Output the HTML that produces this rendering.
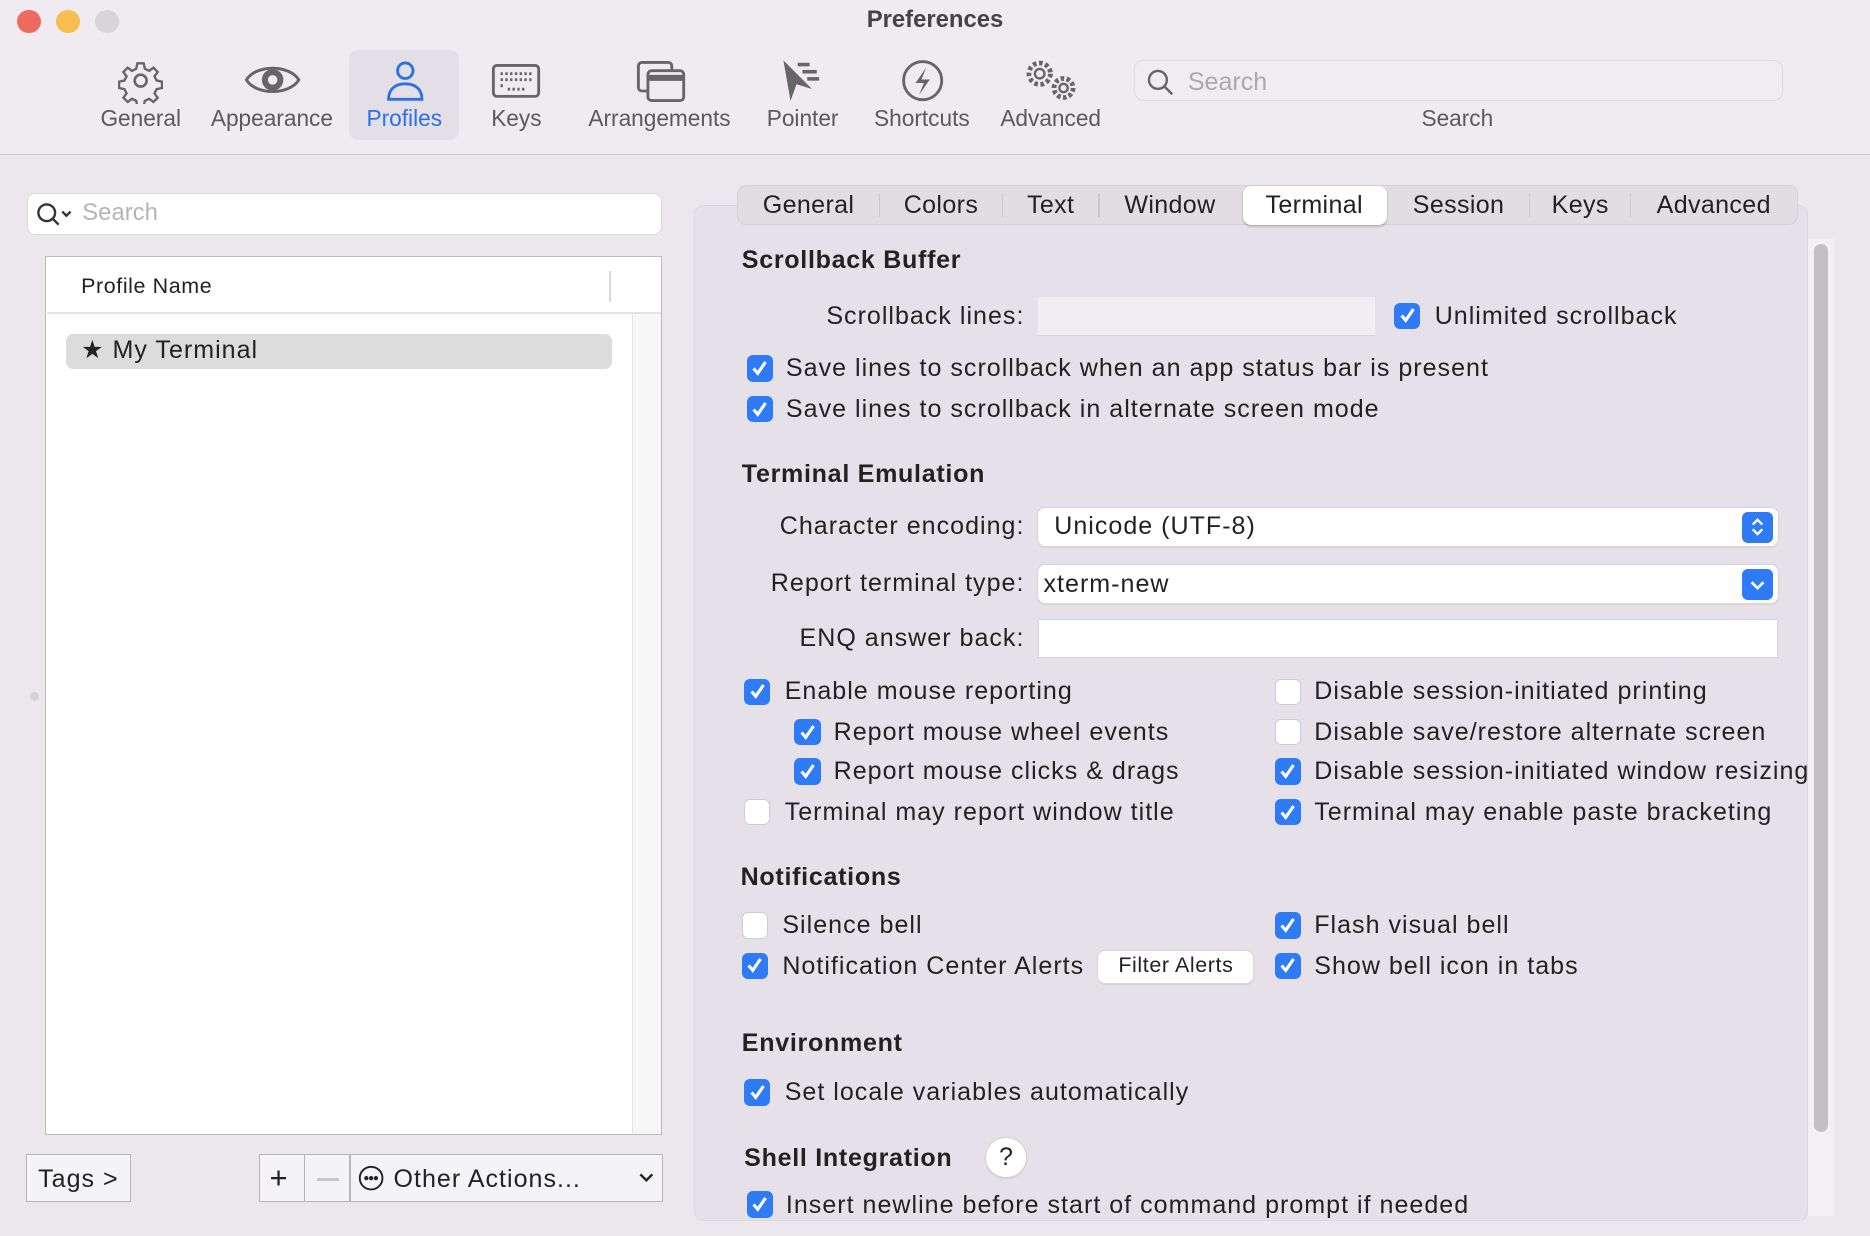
<!DOCTYPE html>
<html><head><meta charset="utf-8"><style>
*{margin:0;padding:0;box-sizing:border-box}
html,body{width:1870px;height:1236px;overflow:hidden;background:#efebf0}
#w{zoom:1.19260;width:1568px;height:1036px;position:relative;font-family:"Liberation Sans",sans-serif;color:#222;background:#efebf0}
.a{position:absolute;white-space:nowrap}
.t{font-size:21px;line-height:24px;letter-spacing:0.85px}
.h{font-size:21px;font-weight:bold;line-height:24px;letter-spacing:0.6px}
.cb{position:absolute;width:22px;height:22px;border-radius:5px;background:#2f7bf6}
.cb svg{position:absolute;left:3px;top:3px}
.cb.off{background:#fff;border:1px solid #cfcbd2}
.lbl{font-size:19px;color:#5a5a5e;line-height:22px;text-align:center;width:140px}
.ic{position:absolute}
.tab{position:absolute;top:160px;font-size:21px;line-height:24px;transform:translateX(-50%);letter-spacing:0.3px}
.sep{position:absolute;top:162px;width:1px;height:20px;background:#cdc8cf}
</style></head><body><div id="w">
<div class="a" style="left:14px;top:8px;width:20px;height:20px;border-radius:50%;background:#ec6a5e"></div>
<div class="a" style="left:47px;top:8px;width:20px;height:20px;border-radius:50%;background:#f4bf4f"></div>
<div class="a" style="left:80px;top:8px;width:20px;height:20px;border-radius:50%;background:#d7d4da"></div>
<div class="a" style="left:0;width:1568px;top:5px;text-align:center;font-size:20px;font-weight:bold;color:#444;line-height:24px">Preferences</div>
<div class="a" style="left:293px;top:42px;width:92px;height:75px;border-radius:8px;background:#e3dfe6"></div>
<svg class="ic" style="left:99px;top:49px" width="38" height="38" viewBox="0 0 38 38" fill="none" stroke="#666" stroke-width="2.2"><path d="M16 3h6l1 5 4 2 4-3 4 4-3 4 2 4 5 1v6l-5 1-2 4 3 4-4 4-4-3-4 2-1 5h-6l-1-5-4-2-4 3-4-4 3-4-2-4-5-1v-6l5-1 2-4-3-4 4-4 4 3 4-2z" transform="scale(.9) translate(2 2)"/><circle cx="19" cy="19" r="5"/></svg>
<svg class="ic" style="left:205px;top:52px" width="48" height="30" viewBox="0 0 48 30" fill="none" stroke="#666" stroke-width="2.5"><path d="M2 15C10 2 38 2 46 15C38 28 10 28 2 15Z"/><circle cx="24" cy="15" r="9" fill="#666" stroke="none"/><circle cx="24" cy="15" r="4" fill="#efebf0" stroke="none"/></svg>
<svg class="ic" style="left:323px;top:50px" width="34" height="36" viewBox="0 0 34 36" fill="none" stroke="#2f6fe6" stroke-width="2.4"><circle cx="17" cy="9" r="6.5"/><path d="M3 33C3 24 9 20 17 20C25 20 31 24 31 33Z"/></svg>
<svg class="ic" style="left:412px;top:53px" width="42" height="30" viewBox="0 0 42 30" fill="none" stroke="#666" stroke-width="2.4"><rect x="2" y="2" width="38" height="26" rx="3"/><path d="M8 9h26M8 14h26M8 19h3M14 22h14" stroke-dasharray="2 2"/></svg>
<svg class="ic" style="left:533px;top:50px" width="42" height="36" viewBox="0 0 42 36" fill="none" stroke="#666" stroke-width="2.4"><rect x="2" y="2" width="28" height="24" rx="3"/><rect x="10" y="9" width="30" height="25" rx="3" fill="#efebf0"/><path d="M10 15h30" stroke-width="5"/></svg>
<svg class="ic" style="left:655px;top:49px" width="36" height="40" viewBox="0 0 36 40" fill="#666"><path d="M2 2L8 36L13 22L26 26Z"/><rect x="14" y="4" width="10" height="3"/><rect x="18" y="10" width="12" height="3"/><rect x="22" y="16" width="10" height="3"/></svg>
<svg class="ic" style="left:755px;top:49px" width="38" height="38" viewBox="0 0 38 38" fill="none" stroke="#666" stroke-width="2.4"><circle cx="19" cy="19" r="16"/><path d="M22 8L13 21h7l-4 10 9-13h-7z" fill="#666" stroke="none"/></svg>
<svg class="ic" style="left:858px;top:48px" width="48" height="40" viewBox="0 0 48 40" fill="none" stroke="#666" stroke-width="2"><circle cx="14" cy="14" r="9" stroke-dasharray="3 2.2" stroke-width="4"/><circle cx="14" cy="14" r="4"/><circle cx="34" cy="26" r="8" stroke-dasharray="3 2" stroke-width="4"/><circle cx="34" cy="26" r="3.5"/></svg>
<div class="a lbl" style="left:48px;top:88px">General</div>
<div class="a lbl" style="left:158px;top:88px">Appearance</div>
<div class="a lbl" style="left:269px;top:88px;color:#2f6fe6">Profiles</div>
<div class="a lbl" style="left:363px;top:88px">Keys</div>
<div class="a lbl" style="left:483px;top:88px">Arrangements</div>
<div class="a lbl" style="left:603px;top:88px">Pointer</div>
<div class="a lbl" style="left:703px;top:88px">Shortcuts</div>
<div class="a lbl" style="left:811px;top:88px">Advanced</div>
<div class="a" style="left:951px;top:50px;width:544px;height:35px;border-radius:8px;background:#f0ecf1;border:1px solid #dedae0"></div>
<svg class="ic" style="left:961px;top:57px" width="24" height="24" viewBox="0 0 24 24" fill="none" stroke="#666" stroke-width="2"><circle cx="10" cy="10" r="7.5"/><path d="M15.5 15.5L22 22"/></svg>
<div class="a" style="left:996px;top:57px;font-size:21px;color:#aaa;line-height:24px">Search</div>
<div class="a lbl" style="left:1152px;top:88px">Search</div>
<div class="a" style="left:0;top:129px;width:1568px;height:1px;background:#cbc7cd"></div>
<div class="a" style="left:0;top:130px;width:1568px;height:906px;background:#ebe7ed"></div>
<div class="a" style="left:23px;top:162px;width:532px;height:35px;border-radius:7px;background:#fff;border:1px solid #dcd8de"></div>
<svg class="ic" style="left:30px;top:169px" width="32" height="22" viewBox="0 0 32 22" fill="none" stroke="#333" stroke-width="2"><circle cx="9" cy="9" r="7"/><path d="M14 14l5 5M22 8l3.5 3.5L29 8"/></svg>
<div class="a" style="left:69px;top:167px;font-size:20px;color:#b5b5b5;line-height:24px">Search</div>
<div class="a" style="left:38px;top:215px;width:517px;height:737px;background:#fff;border:1px solid #bdbabe"></div>
<div class="a" style="left:530px;top:263px;width:24px;height:688px;background:#f7f7f7;border-left:1px solid #e6e6e6"></div>
<div class="a" style="left:39px;top:262px;width:515px;height:1px;background:#e3e3e3"></div>
<div class="a" style="left:511px;top:227px;width:1px;height:26px;background:#d8d8d8"></div>
<div class="a" style="left:68px;top:229px;font-size:18px;line-height:22px;letter-spacing:0.5px">Profile Name</div>
<div class="a" style="left:55px;top:280px;width:458px;height:29px;border-radius:6px;background:#dcdcdc"></div>
<div class="a t" style="left:68px;top:282px">★ My Terminal</div>
<div class="a" style="left:25px;top:580px;width:8px;height:8px;border-radius:50%;background:#d5d2d7"></div>
<div class="a" style="left:22px;top:968px;width:88px;height:40px;background:#f4f3f5;border:1px solid #b8b5ba"></div>
<div class="a t" style="left:32px;top:977px">Tags &gt;</div>
<div class="a" style="left:217px;top:968px;width:339px;height:40px;background:#f4f3f5;border:1px solid #b8b5ba"></div>
<div class="a" style="left:255px;top:968px;width:1px;height:40px;background:#b8b5ba"></div>
<div class="a" style="left:293px;top:968px;width:1px;height:40px;background:#b8b5ba"></div>
<div class="a" style="left:226px;top:973px;font-size:26px;line-height:30px">+</div>
<div class="a" style="left:266px;top:988px;width:18px;height:2px;background:#c8c8c8"></div>
<svg class="ic" style="left:300px;top:977px" width="22" height="22" viewBox="0 0 22 22" fill="none" stroke="#222" stroke-width="1.6"><circle cx="11" cy="11" r="9.5"/><circle cx="7" cy="11" r="1" fill="#222"/><circle cx="11" cy="11" r="1" fill="#222"/><circle cx="15" cy="11" r="1" fill="#222"/></svg>
<div class="a t" style="left:330px;top:977px">Other Actions...</div>
<svg class="ic" style="left:535px;top:983px" width="14" height="10" viewBox="0 0 14 10" fill="none" stroke="#222" stroke-width="2"><path d="M2 2l5 5 5-5"/></svg>
<div class="a" style="left:582px;top:172px;width:934px;height:852px;border-radius:8px;background:#e6e1e8;border:1px solid #dcd7de"></div>
<div class="a" style="left:618px;top:155px;width:890px;height:34px;border-radius:8px;background:#e1dde3;border:1px solid #d5d0d7"></div>
<div class="a" style="left:1042px;top:156px;width:121px;height:33px;border-radius:7px;background:#fff;box-shadow:0 1px 2px rgba(0,0,0,.25)"></div>
<div class="tab" style="left:678px">General</div><div class="sep" style="left:737px"></div>
<div class="tab" style="left:789px">Colors</div><div class="sep" style="left:840px"></div>
<div class="tab" style="left:881px">Text</div><div class="sep" style="left:921px"></div>
<div class="tab" style="left:981px">Window</div>
<div class="tab" style="left:1102px">Terminal</div>
<div class="tab" style="left:1223px">Session</div><div class="sep" style="left:1282px"></div>
<div class="tab" style="left:1325px">Keys</div><div class="sep" style="left:1367px"></div>
<div class="tab" style="left:1437px">Advanced</div>
<div class="a" style="left:1516px;top:200px;width:22px;height:820px;background:#f2f0f3"></div>
<div class="a" style="left:1521px;top:205px;width:12px;height:744px;border-radius:6px;background:#c2c0c3"></div>

<div class="a h" style="left:622px;top:206px">Scrollback Buffer</div>
<div class="a t" style="left:600px;width:259px;text-align:right;top:253px">Scrollback lines:</div>
<div class="a" style="left:870px;top:249px;width:283px;height:33px;background:#f0eef2;border-bottom:1px solid #d8d4da"></div>
<div class="cb" style="left:1169px;top:254px"><svg width="16" height="16" viewBox="0 0 16 16" fill="none" stroke="#fff" stroke-width="2.6"><path d="M3 8l3.5 4L13 2.5"/></svg></div>
<div class="a t" style="left:1203px;top:253px">Unlimited scrollback</div>
<div class="cb" style="left:626px;top:298px"><svg width="16" height="16" viewBox="0 0 16 16" fill="none" stroke="#fff" stroke-width="2.6"><path d="M3 8l3.5 4L13 2.5"/></svg></div>
<div class="a t" style="left:659px;top:297px">Save lines to scrollback when an app status bar is present</div>
<div class="cb" style="left:626px;top:332px"><svg width="16" height="16" viewBox="0 0 16 16" fill="none" stroke="#fff" stroke-width="2.6"><path d="M3 8l3.5 4L13 2.5"/></svg></div>
<div class="a t" style="left:659px;top:331px">Save lines to scrollback in alternate screen mode</div>

<div class="a h" style="left:622px;top:386px">Terminal Emulation</div>
<div class="a t" style="left:600px;width:259px;text-align:right;top:429px">Character encoding:</div>
<div class="a" style="left:870px;top:426px;width:621px;height:32px;border-radius:6px;background:#fff;box-shadow:0 0 0 1px #d9d5db,0 1px 1px rgba(0,0,0,.15)"></div>
<div class="a t" style="left:884px;top:429px">Unicode (UTF-8)</div>
<div class="a" style="left:1461px;top:429px;width:26px;height:26px;border-radius:5px;background:#2f7bf6"></div>
<svg class="ic" style="left:1466px;top:432px" width="16" height="20" viewBox="0 0 16 20" fill="none" stroke="#fff" stroke-width="2"><path d="M4 8l4-4 4 4M4 12l4 4 4-4"/></svg>
<div class="a t" style="left:600px;width:259px;text-align:right;top:477px">Report terminal type:</div>
<div class="a" style="left:870px;top:474px;width:621px;height:32px;border-radius:6px;background:#fff;box-shadow:0 0 0 1px #d9d5db,0 1px 1px rgba(0,0,0,.15)"></div>
<div class="a t" style="left:875px;top:478px">xterm-new</div>
<div class="a" style="left:1461px;top:477px;width:26px;height:26px;border-radius:5px;background:#2f7bf6"></div>
<svg class="ic" style="left:1466px;top:482px" width="16" height="16" viewBox="0 0 16 16" fill="none" stroke="#fff" stroke-width="2.2"><path d="M3 6l5 5 5-5"/></svg>
<div class="a t" style="left:600px;width:259px;text-align:right;top:523px">ENQ answer back:</div>
<div class="a" style="left:870px;top:519px;width:621px;height:33px;background:#fff;border:1px solid #d9d5db"></div>

<div class="cb" style="left:624px;top:569px"><svg width="16" height="16" viewBox="0 0 16 16" fill="none" stroke="#fff" stroke-width="2.6"><path d="M3 8l3.5 4L13 2.5"/></svg></div>
<div class="a t" style="left:658px;top:568px">Enable mouse reporting</div>
<div class="cb" style="left:666px;top:603px"><svg width="16" height="16" viewBox="0 0 16 16" fill="none" stroke="#fff" stroke-width="2.6"><path d="M3 8l3.5 4L13 2.5"/></svg></div>
<div class="a t" style="left:699px;top:602px">Report mouse wheel events</div>
<div class="cb" style="left:666px;top:636px"><svg width="16" height="16" viewBox="0 0 16 16" fill="none" stroke="#fff" stroke-width="2.6"><path d="M3 8l3.5 4L13 2.5"/></svg></div>
<div class="a t" style="left:699px;top:635px">Report mouse clicks &amp; drags</div>
<div class="cb off" style="left:624px;top:670px"></div>
<div class="a t" style="left:658px;top:669px">Terminal may report window title</div>
<div class="cb off" style="left:1069px;top:569px"></div>
<div class="a t" style="left:1102px;top:568px">Disable session-initiated printing</div>
<div class="cb off" style="left:1069px;top:603px"></div>
<div class="a t" style="left:1102px;top:602px">Disable save/restore alternate screen</div>
<div class="cb" style="left:1069px;top:636px"><svg width="16" height="16" viewBox="0 0 16 16" fill="none" stroke="#fff" stroke-width="2.6"><path d="M3 8l3.5 4L13 2.5"/></svg></div>
<div class="a t" style="left:1102px;top:635px;width:414px;overflow:hidden">Disable session-initiated window resizing</div>
<div class="cb" style="left:1069px;top:670px"><svg width="16" height="16" viewBox="0 0 16 16" fill="none" stroke="#fff" stroke-width="2.6"><path d="M3 8l3.5 4L13 2.5"/></svg></div>
<div class="a t" style="left:1102px;top:669px">Terminal may enable paste bracketing</div>

<div class="a h" style="left:621px;top:724px">Notifications</div>
<div class="cb off" style="left:622px;top:765px"></div>
<div class="a t" style="left:656px;top:764px">Silence bell</div>
<div class="cb" style="left:622px;top:799px"><svg width="16" height="16" viewBox="0 0 16 16" fill="none" stroke="#fff" stroke-width="2.6"><path d="M3 8l3.5 4L13 2.5"/></svg></div>
<div class="a t" style="left:656px;top:798px">Notification Center Alerts</div>
<div class="a" style="left:921px;top:797px;width:130px;height:27px;border-radius:6px;background:#fff;box-shadow:0 0 0 1px #d9d5db,0 1px 1px rgba(0,0,0,.2);font-size:18px;line-height:25px;text-align:center;letter-spacing:0.5px">Filter Alerts</div>
<div class="cb" style="left:1069px;top:765px"><svg width="16" height="16" viewBox="0 0 16 16" fill="none" stroke="#fff" stroke-width="2.6"><path d="M3 8l3.5 4L13 2.5"/></svg></div>
<div class="a t" style="left:1102px;top:764px">Flash visual bell</div>
<div class="cb" style="left:1069px;top:799px"><svg width="16" height="16" viewBox="0 0 16 16" fill="none" stroke="#fff" stroke-width="2.6"><path d="M3 8l3.5 4L13 2.5"/></svg></div>
<div class="a t" style="left:1102px;top:798px">Show bell icon in tabs</div>

<div class="a h" style="left:622px;top:863px">Environment</div>
<div class="cb" style="left:624px;top:905px"><svg width="16" height="16" viewBox="0 0 16 16" fill="none" stroke="#fff" stroke-width="2.6"><path d="M3 8l3.5 4L13 2.5"/></svg></div>
<div class="a t" style="left:658px;top:904px">Set locale variables automatically</div>

<div class="a h" style="left:624px;top:959px">Shell Integration</div>
<div class="a" style="left:827px;top:954px;width:33px;height:33px;border-radius:50%;background:#fff;box-shadow:0 0 0 1px #d5d1d7,0 1px 2px rgba(0,0,0,.2);font-size:21px;line-height:33px;text-align:center">?</div>
<div class="a" style="left:583px;top:995px;width:932px;height:28px;overflow:hidden">
<div class="cb" style="left:43px;top:4px"><svg width="16" height="16" viewBox="0 0 16 16" fill="none" stroke="#fff" stroke-width="2.6"><path d="M3 8l3.5 4L13 2.5"/></svg></div>
<div class="a t" style="left:76px;top:4px">Insert newline before start of command prompt if needed</div>
</div>
</div></body></html>
